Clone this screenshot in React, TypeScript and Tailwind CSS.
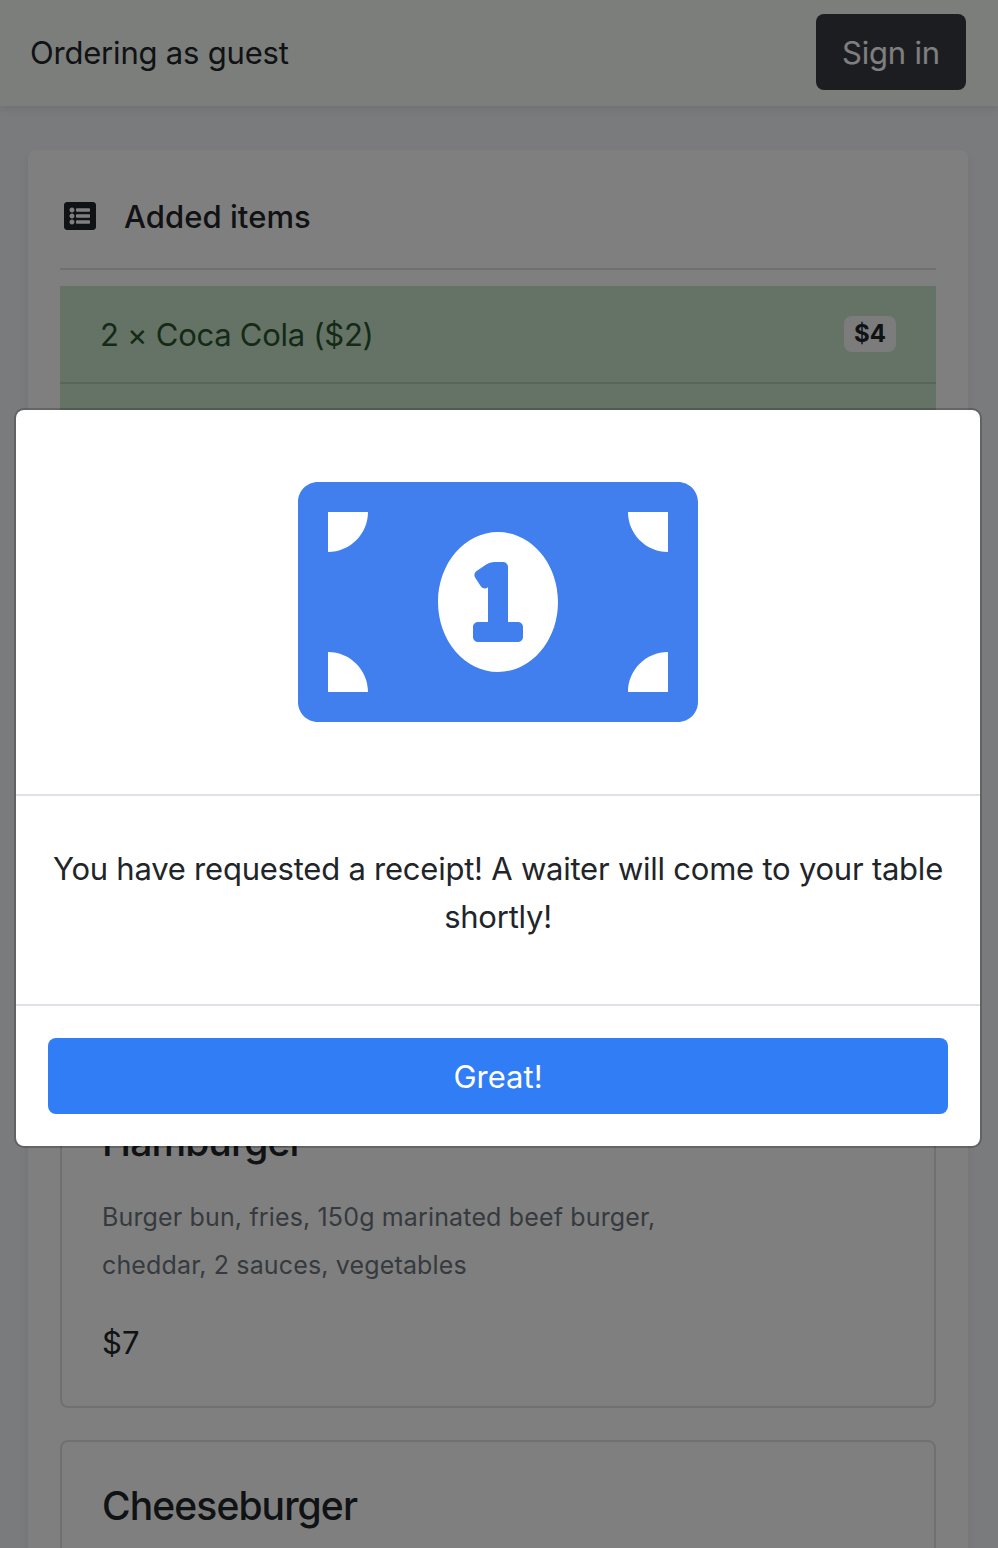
import type { ReactNode } from "react";
import { FaListAlt, FaMoneyBillAlt } from "react-icons/fa";

function Header() {
  return (
    <header className="relative flex h-[106px] shrink-0 items-start justify-between bg-[#f8fcf9] pt-[14px] pr-8 pl-[30px] shadow-[0_4px_8px_rgba(0,0,0,0.075)]">
      <span className="pt-[15px] text-[31px] leading-[48px] tracking-[-0.2px]">Ordering as guest</span>
      <button className="h-[76px] w-[150px] rounded-lg bg-[#383b42] pt-0.5 text-[31px] leading-[48px] tracking-[-0.2px] text-white">
        Sign in
      </button>
    </header>
  );
}

function OrderRow({ children, price }: { children: ReactNode; price?: string }) {
  return (
    <li className="flex h-[98px] shrink-0 items-center justify-between border-b-2 border-black/12 bg-[#cbe6ce] px-10 text-[#2a552c]">
      <span className="pt-0.5 text-[31px] leading-[48px] tracking-[-0.27px]">{children}</span>
      {price && (
        <span className="flex h-9 w-[52px] items-center justify-center rounded-lg bg-[#f8f9fa] text-2xl leading-none font-bold text-[#212529]">
          {price}
        </span>
      )}
    </li>
  );
}

function Dish({ name, description, price }: { name: string; description: string; price: string }) {
  return (
    <article className="h-[332px] shrink-0 rounded-lg border-2 border-black/12 px-10 pt-10">
      <h2 className="text-[39px] leading-[48px] font-medium tracking-[-0.9px]">{name}</h2>
      <p className="mt-[27px] w-[600px] text-[25px] leading-[48px] tracking-[0.15px] text-[#6c757d]">
        {description}
      </p>
      <p className="mt-[30px] text-[31px] leading-[48px]">{price}</p>
    </article>
  );
}

function ReceiptDialog() {
  return (
    <div className="absolute inset-0 bg-black/50 px-[14px] pt-[408px]">
      <section
        role="dialog"
        className="flex h-[740px] w-[968px] flex-col rounded-[10px] border-2 border-black/20 bg-white bg-clip-padding"
      >
        <div className="flex h-[386px] shrink-0 items-center justify-center border-b-2 border-[#dee2e6]">
          <FaMoneyBillAlt className="h-[320px] w-[400px] text-[#417fee]" />
        </div>
        <div className="h-[210px] shrink-0 border-b-2 border-[#dee2e6] px-8 pt-[49px]">
          <p className="text-center text-[31px] leading-[48px] tracking-[-0.23px]">
            You have requested a receipt! A waiter will come to your table shortly!
          </p>
        </div>
        <div className="p-8">
          <button className="h-[76px] w-full rounded-lg bg-[#317df6] pt-0.5 text-[31px] leading-[48px] text-white">
            Great!
          </button>
        </div>
      </section>
    </div>
  );
}

export default function App() {
  return (
    <div className="relative flex h-[1548px] w-[998px] flex-col overflow-hidden bg-[#f5f6fa] font-['Inter',sans-serif] text-[#212529]">
      <Header />
      <main className="mt-11 ml-7 flex h-[1500px] w-[940px] shrink-0 flex-col rounded-lg bg-white px-8 shadow-[0_4px_8px_rgba(0,0,0,0.075)]">
        <div className="flex h-[120px] shrink-0 items-center border-b-2 border-black/12 pt-[14px] pl-1">
          <FaListAlt className="size-8" />
          <h1 className="ml-7 pt-0.5 text-[31px] leading-[48px] font-medium tracking-[0.05px]">Added items</h1>
        </div>
        <ul className="mt-4 flex h-[760px] shrink-0 flex-col">
          <OrderRow price="$4">2 × Coca Cola ($2)</OrderRow>
          <OrderRow price="$7">1 × Hamburger ($7)</OrderRow>
        </ul>
        <div className="mt-[30px] flex flex-col gap-8">
          <Dish
            name="Hamburger"
            description="Burger bun, fries, 150g marinated beef burger, cheddar, 2 sauces, vegetables"
            price="$7"
          />
          <Dish name="Cheeseburger" description="" price="" />
        </div>
      </main>
      <ReceiptDialog />
    </div>
  );
}
